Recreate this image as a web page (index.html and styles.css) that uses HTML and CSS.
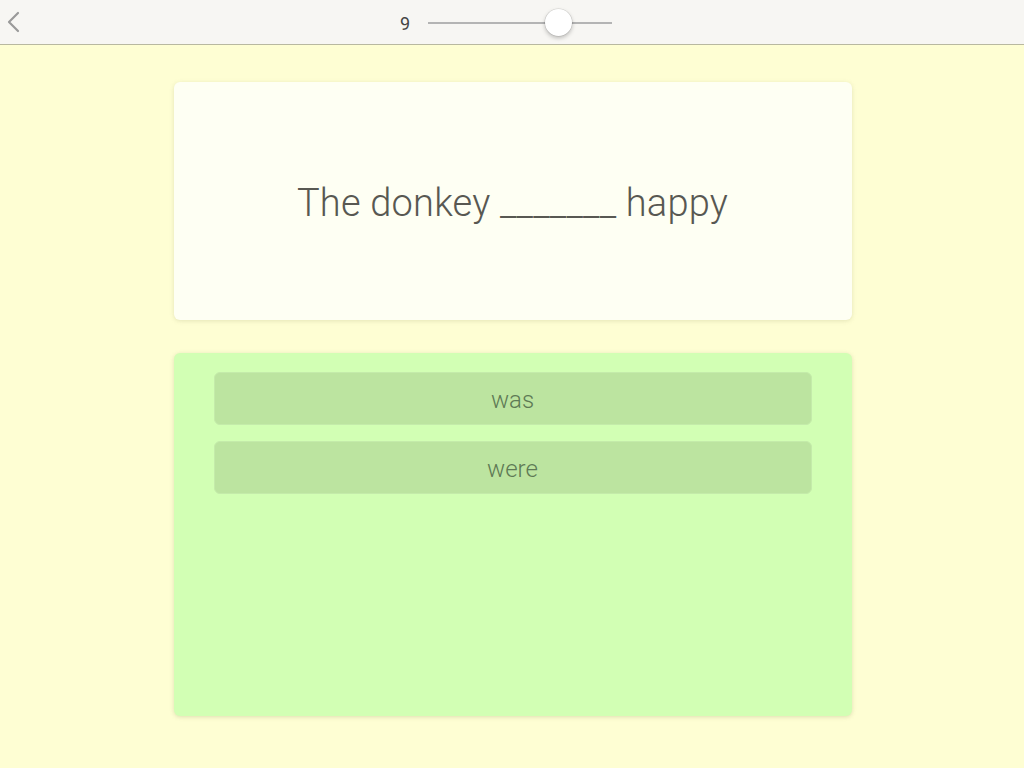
FILE: index.html
```html
<!DOCTYPE html>
<html>
<head>
<meta charset="utf-8">
<link rel="stylesheet" href="styles.css">
</head>
<body>
<header class="topbar">
  <button class="back" aria-label="Back">
    <svg width="14" height="22" viewBox="0 0 14 22"><path d="M12 2 L3 11 L12 20" fill="none" stroke="#9a9a9a" stroke-width="2.2" stroke-linecap="round" stroke-linejoin="round"/></svg>
  </button>
  <div class="slider">
    <span class="slider-value">9</span>
    <div class="track">
      <div class="thumb"></div>
    </div>
  </div>
</header>
<main class="content">
  <section class="question">
    <p class="sentence">The donkey _______ happy</p>
  </section>
  <section class="answers">
    <div class="option">was</div>
    <div class="option">were</div>
  </section>
</main>
</body>
</html>
```

FILE: styles.css
```css
html, body {
  margin: 0;
  padding: 0;
}
body {
  background: #fefed3;
  font-family: Roboto, "Liberation Sans", sans-serif;
  width: 1024px;
  height: 768px;
  overflow: hidden;
}
.topbar {
  height: 45px;
  background: #f7f6f3;
  border-bottom: 1px solid #b8b8a0;
  position: relative;
  box-sizing: border-box;
  display: flex;
  align-items: center;
}
.back {
  background: none;
  border: none;
  padding: 0;
  margin-left: 6px;
  margin-top: 0;
  width: 16px;
  height: 24px;
  display: flex;
  align-items: center;
}
.slider {
  position: absolute;
  left: 400px;
  top: 1px;
  height: 44px;
  display: flex;
  align-items: center;
}
.slider-value {
  font-size: 18px;
  color: #444;
  font-weight: 400;
  width: 28px;
}
.track {
  width: 184px;
  height: 2px;
  background: #b4b4b4;
  position: relative;
}
.thumb {
  position: absolute;
  left: 117px;
  top: -13px;
  width: 27px;
  height: 27px;
  border-radius: 50%;
  background: #ffffff;
  box-shadow: 0 2px 4px rgba(0,0,0,0.25), 0 0 0 0.5px rgba(0,0,0,0.12);
}
.content {
  width: 678px;
  margin: 37px auto 0;
  display: flex;
  flex-direction: column;
  gap: 33px;
  padding-left: 1px;
}
.question {
  height: 238px;
  box-sizing: border-box;
  padding-top: 4px;
  background: #fefff3;
  border-radius: 6px;
  box-shadow: 0 1px 4px rgba(150,150,100,0.25);
  display: flex;
  align-items: center;
  justify-content: center;
}
.sentence {
  margin: 0;
  font-size: 38px;
  font-weight: 300;
  color: #585852;
  letter-spacing: 0.2px;
}
.answers {
  height: 363px;
  box-sizing: border-box;
  background: #d2ffb4;
  border-radius: 6px;
  box-shadow: 0 1px 4px rgba(150,150,100,0.3);
  padding: 19px 40px;
  display: flex;
  flex-direction: column;
  gap: 16px;
}
.option {
  height: 53px;
  padding-top: 3px;
  background: #bce4a0;
  border-radius: 6px;
  border: 1px solid #c4ebaa;
  box-sizing: border-box;
  display: flex;
  align-items: center;
  justify-content: center;
  font-size: 24px;
  font-weight: 300;
  color: #5e7a55;
}
```
